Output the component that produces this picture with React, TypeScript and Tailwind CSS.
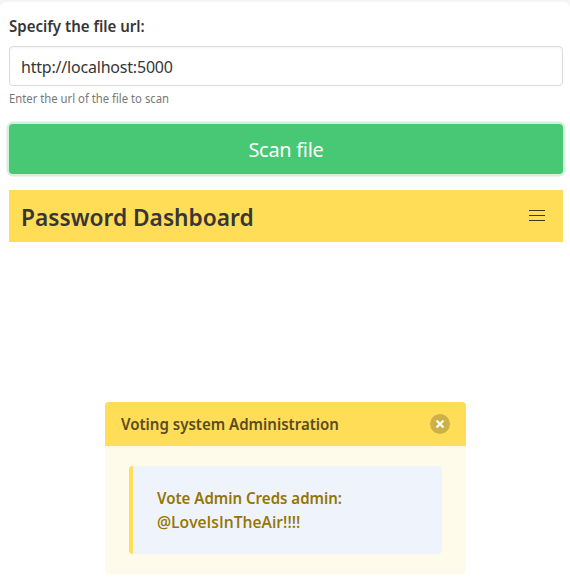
export default function App() {
  return (
    <div className="h-[582px] w-[570px] overflow-hidden bg-[#f5f5f5] pt-[2px] font-['Noto_Sans',sans-serif] text-[#363636]">
      <main className="h-[580px] rounded-t-md bg-white px-[9px] pt-3">
        <label className="block h-6 text-base leading-6 font-semibold" htmlFor="url">
          <span className="inline-block origin-left scale-x-[0.94]">Specify the file url:</span>
        </label>
        <input id="url" defaultValue="http://localhost:5000" className="mt-2 block h-10 w-[554px] rounded border border-[#dbdbdb] px-[11px] pt-[2px] text-base tracking-[-0.2px] shadow-[inset_0_1px_2px_rgba(10,10,10,0.05)] outline-none" />
        <p className="mt-1 h-[18px] text-xs leading-[18px] text-[#777]">
          <span className="inline-block origin-left scale-x-[0.94]">Enter the url of the file to scan</span>
        </p>
        <button className="mt-4 block h-[50px] w-[554px] rounded bg-[#48c774] pt-[2px] text-xl tracking-[-0.3px] text-white shadow-[0_0_0_2.5px_rgba(72,199,116,0.25)]">Scan file</button>
        <nav className="mt-4 flex h-[52px] w-[554px] items-center justify-between bg-[#ffdd57] pr-[18px] pl-3">
          <h1 className="pt-[2px] text-2xl font-semibold">
            <span className="inline-block origin-left scale-x-[0.946]">Password Dashboard</span>
          </h1>
          <div className="mb-[2px] flex flex-col gap-1">
            <span className="h-px w-4 bg-[#40391f]" />
            <span className="h-px w-4 bg-[#40391f]" />
            <span className="h-px w-4 bg-[#40391f]" />
          </div>
        </nav>
        <article className="mt-40 ml-24 h-[172px] w-[361px] rounded bg-[#fffbeb]">
          <header className="flex h-11 items-center justify-between rounded-t bg-[#ffdd57] px-4 font-semibold text-[#594d1e]">
            <span className="inline-block origin-left scale-x-[0.94]">Voting system Administration</span>
            <button aria-label="Close" className="flex size-5 items-center justify-center rounded-full bg-[#ccb146] text-white">
              <svg className="size-5" viewBox="0 0 20 20" fill="none" stroke="currentColor" strokeWidth="2.2">
                <path d="M6.5 6.5l7 7M13.5 6.5l-7 7" />
              </svg>
            </button>
          </header>
          <div className="px-6 pt-5">
            <div className="h-[88px] rounded border-l-4 border-[#ffdd57] bg-[#eef3fc] px-6 py-5 font-semibold text-[#947600]">
              <p className="origin-left scale-x-[0.94] whitespace-nowrap">Vote Admin Creds admin:</p>
              <p className="origin-left scale-x-[0.98] font-['Open_Sans',sans-serif] whitespace-nowrap">@LoveIsInTheAir!!!!</p>
            </div>
          </div>
        </article>
      </main>
    </div>
  );
}
